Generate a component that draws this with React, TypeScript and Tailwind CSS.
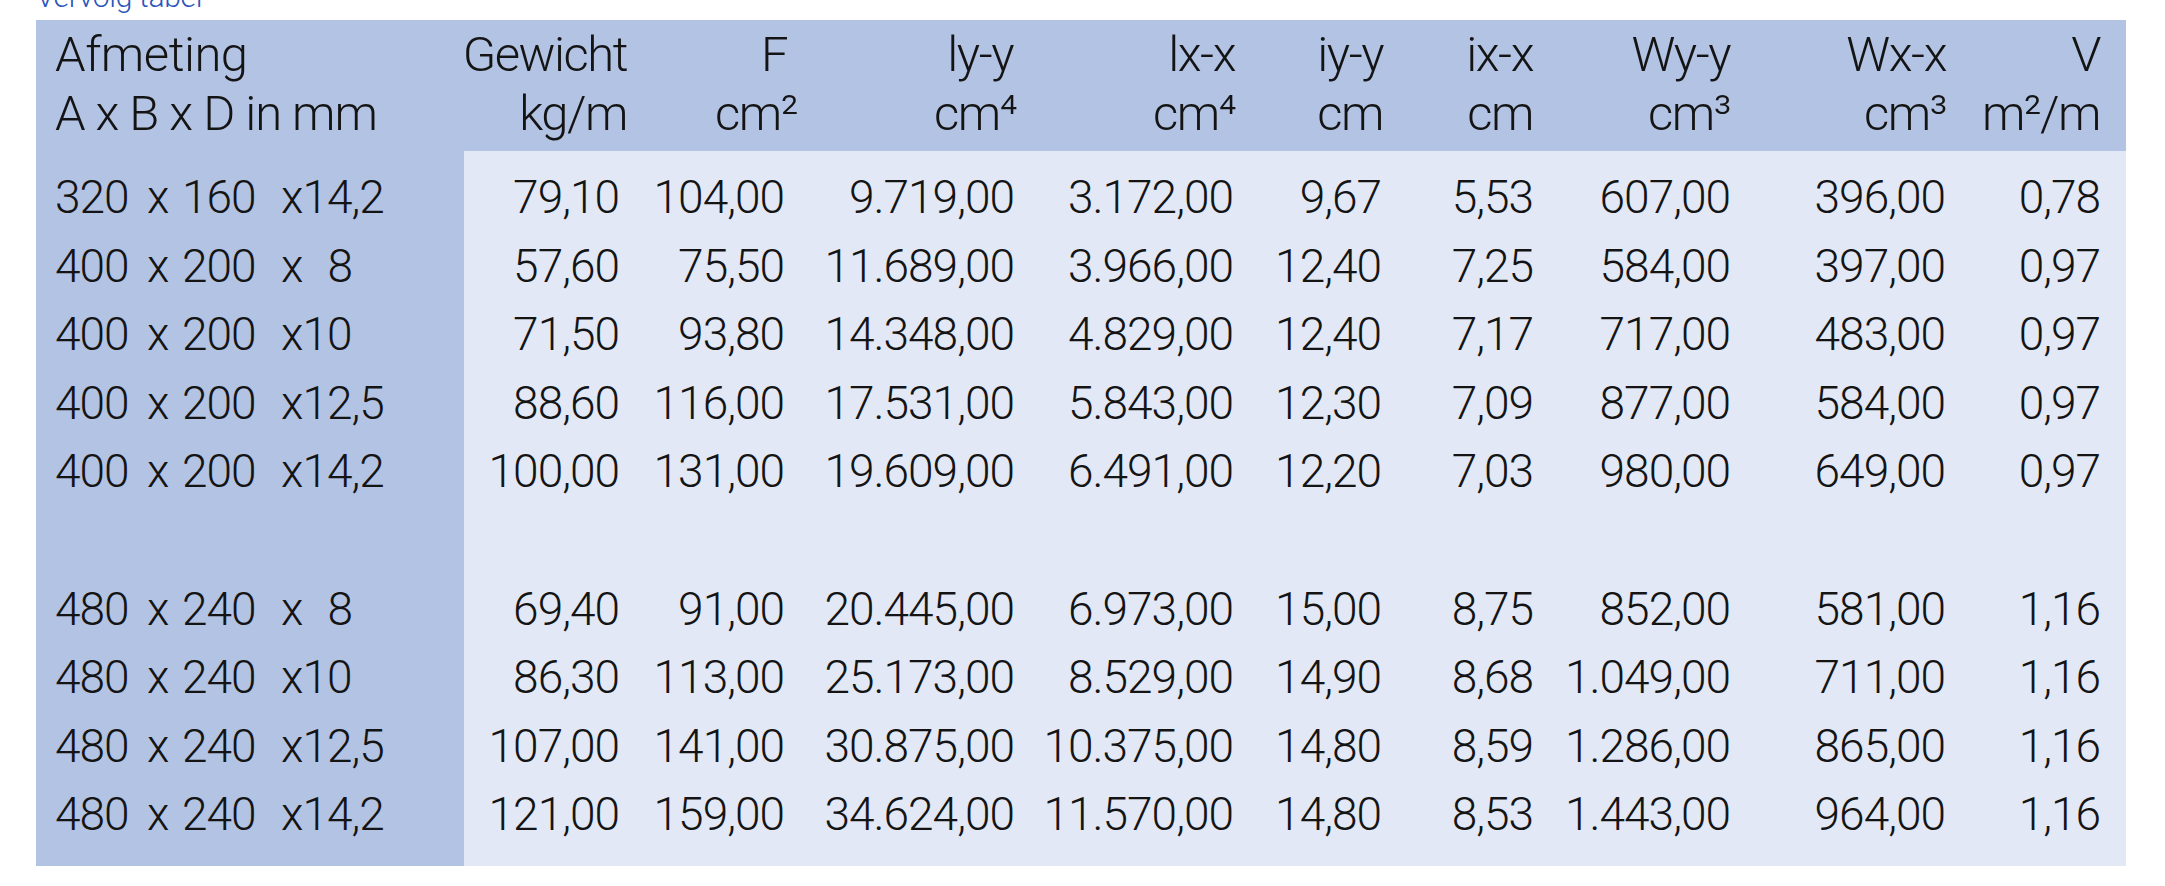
import React from "react";

type Row = {
  a: string;
  b: string;
  d: string;
  v: string[];
} | null;

const rows: Row[] = [
  { a: "320", b: "160", d: "14,2", v: ["79,10", "104,00", "9.719,00", "3.172,00", "9,67", "5,53", "607,00", "396,00", "0,78"] },
  { a: "400", b: "200", d: "8", v: ["57,60", "75,50", "11.689,00", "3.966,00", "12,40", "7,25", "584,00", "397,00", "0,97"] },
  { a: "400", b: "200", d: "10", v: ["71,50", "93,80", "14.348,00", "4.829,00", "12,40", "7,17", "717,00", "483,00", "0,97"] },
  { a: "400", b: "200", d: "12,5", v: ["88,60", "116,00", "17.531,00", "5.843,00", "12,30", "7,09", "877,00", "584,00", "0,97"] },
  { a: "400", b: "200", d: "14,2", v: ["100,00", "131,00", "19.609,00", "6.491,00", "12,20", "7,03", "980,00", "649,00", "0,97"] },
  null,
  { a: "480", b: "240", d: "8", v: ["69,40", "91,00", "20.445,00", "6.973,00", "15,00", "8,75", "852,00", "581,00", "1,16"] },
  { a: "480", b: "240", d: "10", v: ["86,30", "113,00", "25.173,00", "8.529,00", "14,90", "8,68", "1.049,00", "711,00", "1,16"] },
  { a: "480", b: "240", d: "12,5", v: ["107,00", "141,00", "30.875,00", "10.375,00", "14,80", "8,59", "1.286,00", "865,00", "1,16"] },
  { a: "480", b: "240", d: "14,2", v: ["121,00", "159,00", "34.624,00", "11.570,00", "14,80", "8,53", "1.443,00", "964,00", "1,16"] },
];

const valuePad = ["pr-[8px]", "pr-[13px]", "pr-[2px]", "pr-[2px]", "pr-[2px]", "pr-0", "pr-0", "pr-[1px]", "pr-0"];

const headers: { top: string; bottom: string; topPad: string }[] = [
  { top: "Gewicht", bottom: "kg/m", topPad: "pr-0" },
  { top: "F", bottom: "cm²", topPad: "pr-[10px]" },
  { top: "ly-y", bottom: "cm⁴", topPad: "pr-[3px]" },
  { top: "lx-x", bottom: "cm⁴", topPad: "pr-0" },
  { top: "iy-y", bottom: "cm", topPad: "pr-0" },
  { top: "ix-x", bottom: "cm", topPad: "pr-0" },
  { top: "Wy-y", bottom: "cm³", topPad: "pr-0" },
  { top: "Wx-x", bottom: "cm³", topPad: "pr-0" },
  { top: "V", bottom: "m²/m", topPad: "pr-0" },
];

export default function App() {
  return (
    <div className="w-[2165px] h-[886px] bg-white overflow-hidden font-['Roboto',sans-serif] font-light text-[#141414]">
      <div className="mt-[-18px] pl-[36px] text-[30px] leading-[30px] text-[#2b55bd] tracking-[-0.3px]">
        Vervolg tabel
      </div>
      <div className="ml-[36px] mt-[8px] w-[2090px]">
        {/* Header */}
        <div className="grid grid-cols-[428px_163px_170px_219px_219px_148px_150px_197px_216px_154px_26px] bg-[#b3c3e3] pt-[5px] pb-[8px] text-[49px] leading-[59px] tracking-[-1.5px]">
          <div className="pl-[19px] flex flex-col whitespace-nowrap">
            <span className="tracking-[-0.5px]">Afmeting</span>
            <span className="tracking-[-1px]">A x B x D in mm</span>
          </div>
          {headers.map((h, i) => (
            <div key={i} className="flex flex-col items-end whitespace-nowrap">
              <span className={h.topPad}>{h.top}</span>
              <span>{h.bottom}</span>
            </div>
          ))}
          <div />
        </div>
        {/* Body */}
        <div className="flex text-[46px] leading-[68.6px] tracking-[-1px]">
          <div className="w-[428px] bg-[#b3c3e3] pt-[12px] pb-[17px]">
            {rows.map((r, i) =>
              r ? (
                <div key={i} className="h-[68.6px] pl-[19px] whitespace-nowrap">
                  <span className="inline-block w-[92px]">{r.a}</span>
                  <span className="inline-block w-[35px]">x</span>
                  <span className="inline-block w-[99px]">{r.b}</span>
                  <span>x</span>
                  {r.d.length === 1 && <span className="inline-block w-[25px]" />}
                  <span>{r.d}</span>
                </div>
              ) : (
                <div key={i} className="h-[68.6px]" />
              )
            )}
          </div>
          <div className="flex-1 bg-[#e2e8f5] pt-[12px] pb-[17px]">
            {rows.map((r, i) =>
              r ? (
                <div key={i} className="grid grid-cols-[163px_170px_219px_219px_148px_150px_197px_216px_154px_26px] h-[68.6px]">
                  {r.v.map((val, j) => (
                    <div key={j} className={`text-right whitespace-nowrap ${valuePad[j]}`}>
                      {val}
                    </div>
                  ))}
                  <div />
                </div>
              ) : (
                <div key={i} className="h-[68.6px]" />
              )
            )}
          </div>
        </div>
      </div>
    </div>
  );
}
